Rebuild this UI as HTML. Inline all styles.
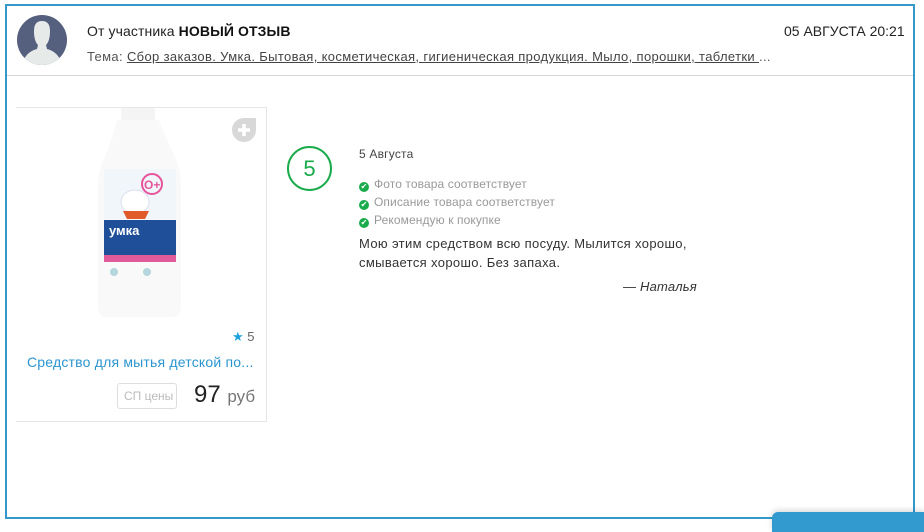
<!DOCTYPE html>
<html><head><meta charset="utf-8"><style>
*{margin:0;padding:0;box-sizing:border-box}
body{width:924px;height:529px;overflow:hidden;background:#fff;font-family:"Liberation Sans","DejaVu Sans",sans-serif;position:relative;color:#333}
.frame{position:absolute;left:5px;top:4px;width:910px;height:515px;border:2px solid #3399cc;border-bottom-width:2px}
.a{position:absolute}
.hr{position:absolute;left:7px;top:75px;width:906px;height:1px;background:#d8d8d8}
.t{font-size:14px;color:#222}
.link{color:#444;text-decoration:underline}
.blue{position:absolute;left:772px;top:512px;width:152px;height:20px;background:#339ad0;border-top-left-radius:6px;box-shadow:0 -2px 6px rgba(0,0,0,.15)}
.ck{display:inline-block;width:10px;height:10px;border-radius:50%;background:#1aab4b;color:#fff;font-size:8px;line-height:10px;text-align:center;vertical-align:-1px;margin-right:5px}
</style></head><body>
<div class="frame"></div>
<div class="hr"></div>
<svg class="a" style="left:17px;top:15px" width="50" height="50" viewBox="0 0 50 50">
<clipPath id="c"><circle cx="25" cy="25" r="25"/></clipPath>
<g clip-path="url(#c)"><rect width="50" height="50" fill="#555f7e"/>
<path d="M17 16 Q17 6 25 6 Q33 6 33 16 Q33 26 29 30 L30 34 Q42 37 45 50 L5 50 Q8 37 20 34 L21 30 Q17 26 17 16Z" fill="#e6ebea"/></g></svg>
<div class="a t" style="left:87px;top:23px;font-size:14px;letter-spacing:0.1px">От участника <b style="color:#111">НОВЫЙ ОТЗЫВ</b></div>
<div class="a" style="left:87px;top:49px;font-size:13px;color:#555;letter-spacing:0.35px">Тема: <span class="link">Сбор заказов. Умка. Бытовая, косметическая, гигиеническая продукция. Мыло, порошки, таблетки </span>...</div>
<div class="a t" style="left:784px;top:23px">05 АВГУСТА 20:21</div>

<div class="a" style="left:16px;top:107px;width:251px;height:315px;border:1px solid #e6e6e6;border-left:none"></div>
<svg class="a" style="left:95px;top:107px" width="90" height="215" viewBox="0 0 90 215">
<rect x="26" y="1" width="34" height="12" rx="2" fill="#f4f4f4"/>
<path d="M22 13 L64 13 Q70 30 80 50 Q86 62 86 80 L86 200 Q86 210 76 210 L12 210 Q3 210 3 200 L3 80 Q3 62 10 50 Q18 30 22 13Z" fill="#f9f9fa"/>
<rect x="9" y="62" width="72" height="50" fill="#f1f6fb"/>
<circle cx="57" cy="77" r="10" fill="none" stroke="#e6559a" stroke-width="2"/>
<text x="49" y="82" font-size="12" fill="#e6559a" font-weight="bold" font-family="Liberation Sans">O+</text>
<ellipse cx="40" cy="95" rx="14" ry="12" fill="#fff" stroke="#dde"/>
<path d="M28 104 L54 104 L50 112 L32 112Z" fill="#e05a2a"/>
<rect x="9" y="113" width="72" height="35" fill="#1f4f99"/>
<text x="14" y="128" font-size="13" font-weight="bold" fill="#fff" font-family="Liberation Sans">умка</text>
<rect x="9" y="148" width="72" height="7" fill="#e15a99"/>
<circle cx="19" cy="165" r="4" fill="#b5d6dd"/><circle cx="52" cy="165" r="4" fill="#b5d6dd"/>
</svg>
<svg class="a" style="left:231px;top:117px" width="26" height="26" viewBox="0 0 26 26"><path d="M13 1 A12 12 0 1 0 25 13 L25 1Z" fill="#d8d8d8"/><path d="M13 7v12M7 13h12" stroke="#fff" stroke-width="3.5"/></svg>
<div class="a" style="left:232px;top:329px;font-size:13px;color:#666"><span style="color:#1ba3dd">★</span> 5</div>
<div class="a" style="left:27px;top:354px;font-size:14px;color:#2a95d0;letter-spacing:0.2px">Средство для мытья детской по...</div>
<div class="a" style="left:117px;top:383px;width:60px;height:26px;border:1px solid #ddd;border-radius:3px;font-size:12px;color:#bbb;line-height:24px;padding-left:6px">СП цены</div>
<div class="a" style="left:194px;top:381px;font-size:24px;color:#222">97 <span style="font-size:17px;color:#777">руб</span></div>

<div class="a" style="left:287px;top:146px;width:45px;height:45px;border:2px solid #1aab4b;border-radius:50%;text-align:center;line-height:41px;font-size:22px;color:#1aab4b">5</div>
<div class="a" style="left:359px;top:147px;font-size:12px;color:#444;letter-spacing:0.2px">5 Августа</div>
<div class="a" style="left:359px;top:175px;font-size:12px;color:#999;line-height:18px;letter-spacing:0.1px">
<div><span class="ck">✔</span>Фото товара соответствует</div>
<div><span class="ck">✔</span>Описание товара соответствует</div>
<div><span class="ck">✔</span>Рекомендую к покупке</div></div>
<div class="a" style="left:359px;top:234px;font-size:13px;color:#333;line-height:19px;letter-spacing:0.35px">Мою этим средством всю посуду. Мылится хорошо,<br>смывается хорошо. Без запаха.</div>
<div class="a" style="left:623px;top:279px;font-size:13px;font-style:italic;color:#333;letter-spacing:0.2px">— Наталья</div>
<div class="blue"></div>
</body></html>
